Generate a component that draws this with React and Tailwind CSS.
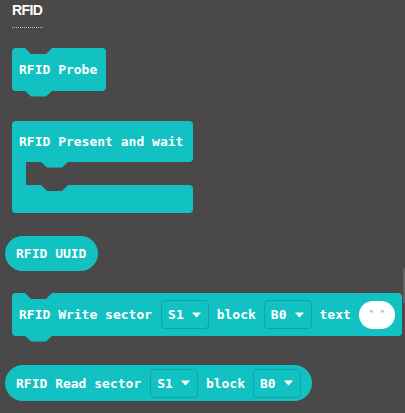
import React from "react";

const TEAL = "#12c2c2";
const BG = "#4a4848";

function TopNotch() {
  return (
    <svg className="absolute left-[12px] top-[-1px]" width="29" height="8" viewBox="0 0 29 8">
      <polygon points="0,0 29,0 22,7 7,7" fill={BG} />
    </svg>
  );
}

function BottomTab({ left = 12 }) {
  return (
    <svg className="absolute bottom-[-6px]" style={{ left }} width="29" height="7" viewBox="0 0 29 7">
      <polygon points="0,0 29,0 22,6.5 7,6.5" fill={TEAL} />
    </svg>
  );
}

function Dropdown({ label }) {
  return (
    <div className="flex h-[29px] items-center gap-[8px] rounded-[4px] border border-[#0fa5a5] pl-[6px] pr-[7px]">
      <span>{label}</span>
      <svg width="9" height="6" viewBox="0 0 9 6">
        <polygon points="0,0.5 9,0.5 4.5,5.5" fill="white" />
      </svg>
    </div>
  );
}

export default function App() {
  return (
    <div className="relative h-[413px] w-[405px] overflow-hidden bg-[#4a4848] text-white">
      <div className="absolute right-0 top-[268px] h-[35px] w-[2px] bg-[#666464]" />
      <div className="pl-[12px] pt-[1px]">
        <div className="font-['Liberation_Sans',Arial,sans-serif] text-[14px] font-bold leading-[18px] tracking-[-0.6px]">
          RFID
        </div>
        <div className="mt-[8px] w-[31px] border-t border-dotted border-[#bdbdbd]" />
      </div>

      <div className="font-['DejaVu_Sans_Mono',monospace] text-[13px] font-bold leading-none">
        {/* Probe */}
        <div className="ml-[12px] mt-[20px] flex">
          <div className="relative flex h-[43px] w-[94px] items-center rounded-[4px] bg-[#12c2c2] pl-[7px]">
            <TopNotch />
            <span>RFID Probe</span>
            <BottomTab />
          </div>
        </div>

        {/* Present and wait */}
        <div className="ml-[12px] mt-[30px] flex flex-col">
          <div className="relative flex h-[41px] w-[181px] items-center rounded-t-[4px] rounded-br-[4px] bg-[#12c2c2] pl-[7px]">
            <span>RFID Present and wait</span>
            <BottomTab left={28} />
          </div>
          <div className="h-[23px] w-[14px] bg-[#12c2c2]" />
          <div className="relative h-[28px] w-[181px] rounded-b-[4px] rounded-tr-[4px] bg-[#12c2c2]">
            <svg className="absolute left-[28px] top-[-1px]" width="29" height="8" viewBox="0 0 29 8">
              <polygon points="0,0 29,0 22,7 7,7" fill={BG} />
            </svg>
          </div>
        </div>

        {/* UUID */}
        <div className="ml-[5px] mt-[23px] flex">
          <div className="flex h-[35px] items-center rounded-full bg-[#12c2c2] pl-[11px] pr-[12px]">
            <span>RFID UUID</span>
          </div>
        </div>

        {/* Write */}
        <div className="ml-[12px] mt-[22px] flex">
          <div className="relative flex h-[43px] w-[390px] items-center gap-[8px] rounded-[4px] bg-[#12c2c2] pl-[7px]">
            <TopNotch />
            <span className="mr-[1px]">RFID Write sector</span>
            <Dropdown label="S1" />
            <span>block</span>
            <Dropdown label="B0" />
            <span>text</span>
            <div className="flex h-[28px] w-[36px] items-center justify-center gap-[7px] rounded-full bg-white font-['DejaVu_Sans',sans-serif] text-[9px] font-normal text-[#a08aa0]">
              <span>"</span>
              <span>"</span>
            </div>
            <BottomTab />
          </div>
        </div>

        {/* Read */}
        <div className="ml-[5px] mt-[29px] flex">
          <div className="flex h-[36px] items-center gap-[8px] rounded-full bg-[#12c2c2] pl-[11px] pr-[11px]">
            <span className="mr-[1px]">RFID Read sector</span>
            <Dropdown label="S1" />
            <span>block</span>
            <Dropdown label="B0" />
          </div>
        </div>
      </div>
    </div>
  );
}
